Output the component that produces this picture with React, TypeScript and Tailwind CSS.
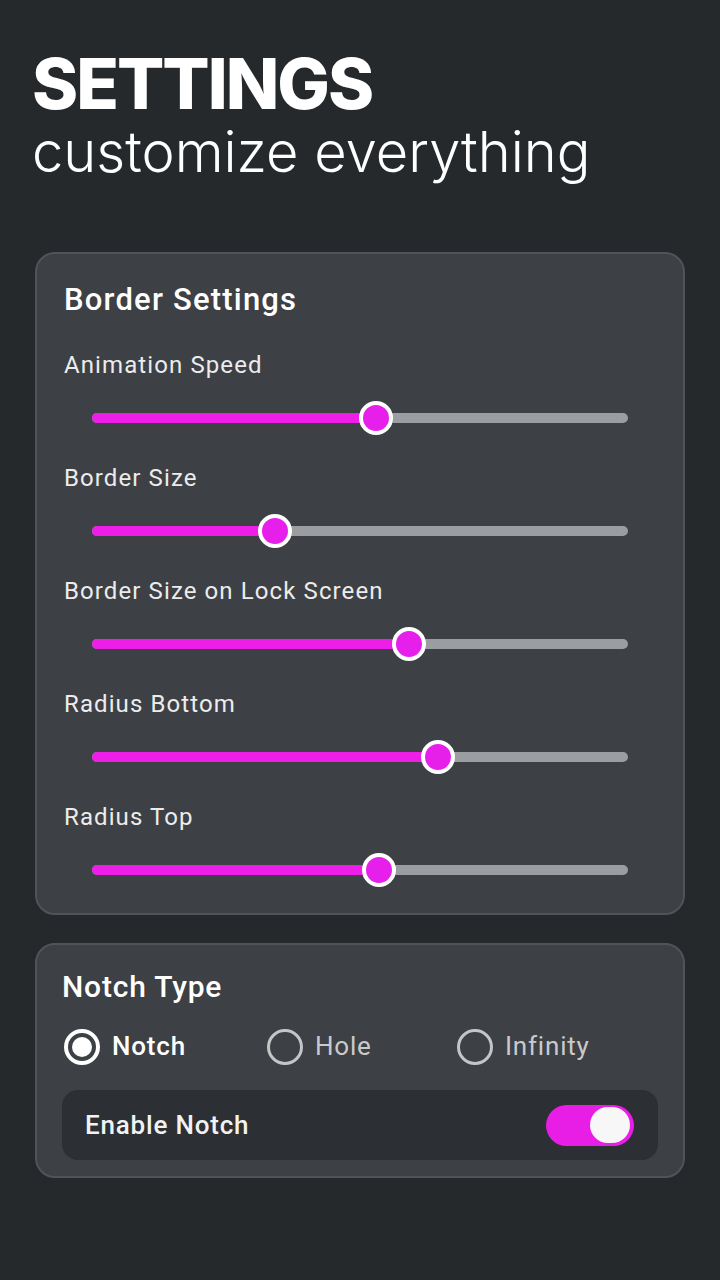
import { useState } from "react";

const sliders = [
  { label: "Animation Speed", value: 0.529 },
  { label: "Border Size", value: 0.342 },
  { label: "Border Size on Lock Screen", value: 0.591 },
  { label: "Radius Bottom", value: 0.645 },
  { label: "Radius Top", value: 0.536 },
];

function Slider({ value }: { value: number }) {
  return (
    <div className="relative mx-[28px] h-[34px] flex items-center">
      <div className="w-full h-[10px] rounded-full bg-[#9b9da0]" />
      <div
        className="absolute left-0 h-[10px] rounded-full bg-[#ee1ee9]"
        style={{ width: `${value * 100}%` }}
      />
      <div
        className="absolute w-[34px] h-[34px] -ml-[17px] rounded-full bg-[#e620ea] border-[4px] border-white"
        style={{ left: `${value * 100}%` }}
      />
    </div>
  );
}

function Radio({ label, checked }: { label: string; checked?: boolean }) {
  return (
    <div className="flex items-center gap-[12px]">
      {checked ? (
        <div className="w-[36px] h-[36px] rounded-full border-[4px] border-white flex items-center justify-center">
          <div className="w-[20px] h-[20px] rounded-full bg-white" />
        </div>
      ) : (
        <div className="w-[36px] h-[36px] rounded-full border-[3px] border-[#c4c5c7]" />
      )}
      <span
        className={
          "text-[26px] tracking-[0.8px] " +
          (checked ? "text-white font-medium" : "text-[#c9cacc]")
        }
      >
        {label}
      </span>
    </div>
  );
}

export default function App() {
  const [on, setOn] = useState(true);
  return (
    <div
      className="min-h-[1280px] w-[720px] bg-[#26292c] text-white"
      style={{ fontFamily: "Roboto, 'Noto Sans', sans-serif" }}
    >
      <div className="px-[32px] pt-[44px]">
        <h1
          className="text-[70px] leading-[80px] font-extrabold tracking-[-2px]"
          style={{ fontFamily: "Inter, sans-serif" }}
        >
          SETTINGS
        </h1>
        <p
          className="text-[56px] leading-[64px] font-light -mt-[4px]"
          style={{ fontFamily: "Inter, sans-serif" }}
        >
          customize everything
        </p>
      </div>

      <div className="mx-[35px] mt-[68px] rounded-[20px] border-2 border-[#505357] bg-[#3d4044] pt-[26px] pb-[26px] px-[27px]">
        <h2 className="text-[31px] font-medium tracking-[1.2px] leading-[40px]">
          Border Settings
        </h2>
        <div className="flex flex-col gap-[28px] mt-[30px]">
          {sliders.map((s) => (
            <div key={s.label} className="flex flex-col gap-[21px]">
              <span className="text-[24px] leading-[30px] tracking-[1.1px] text-[#ececec]">
                {s.label}
              </span>
              <Slider value={s.value} />
            </div>
          ))}
        </div>
      </div>

      <div className="mx-[35px] mt-[28px] rounded-[20px] border-2 border-[#505357] bg-[#3d4044] pt-[22px] pb-[16px] px-[25px]">
        <h2 className="text-[30px] font-medium tracking-[0.8px] leading-[40px]">
          Notch Type
        </h2>
        <div className="flex items-center mt-[20px] pl-[2px]">
          <div className="w-[203px]">
            <Radio label="Notch" checked />
          </div>
          <div className="w-[190px]">
            <Radio label="Hole" />
          </div>
          <Radio label="Infinity" />
        </div>
        <div className="mt-[24px] rounded-[16px] bg-[#2c2f33] h-[70px] flex items-center justify-between pl-[23px] pr-[24px]">
          <span className="text-[26px] font-medium tracking-[0.8px] text-[#f2f2f2]">
            Enable Notch
          </span>
          <button
            onClick={() => setOn(!on)}
            className={
              "w-[88px] h-[41px] rounded-full flex items-center px-[4px] " +
              (on ? "bg-[#e81ee6] justify-end" : "bg-[#777] justify-start")
            }
          >
            <div className="w-[40px] h-[36px] rounded-full bg-[#f7f7f7]" />
          </button>
        </div>
      </div>
    </div>
  );
}
